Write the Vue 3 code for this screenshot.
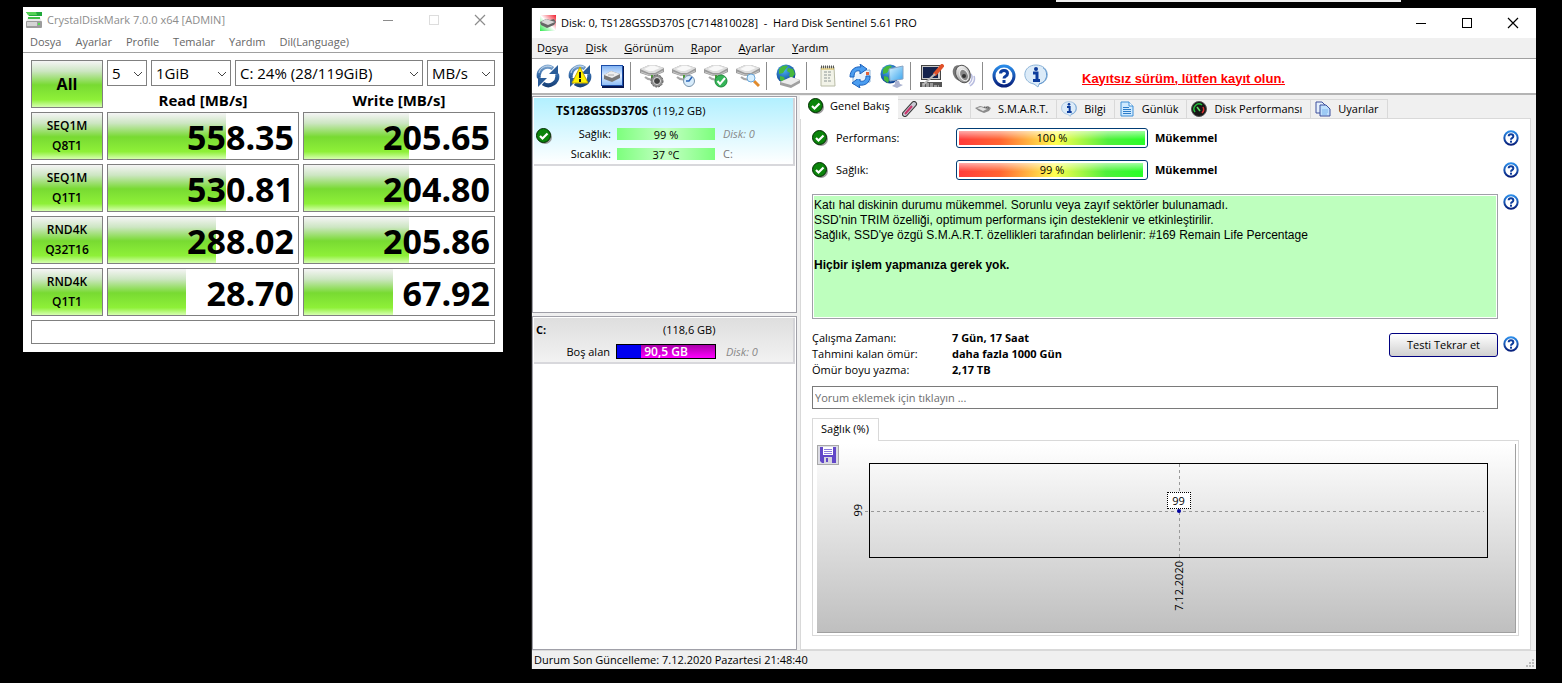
<script setup>
import { ref } from 'vue'

const markMenu = ['Dosya', 'Ayarlar', 'Profile', 'Temalar', 'Yardım', 'Dil(Language)']
const selects = [
  { id: 'count', label: 'Test sayısı', value: '5' },
  { id: 'size', label: 'Test boyutu', value: '1GiB' },
  { id: 'volume-pick', label: 'Sürücü', value: 'C: 24% (28/119GiB)' },
  { id: 'unit', label: 'Birim', value: 'MB/s' },
]
const tests = [
  { name: 'SEQ1M', queue: 'Q8T1', read: ['558.35', 62], write: ['205.65', 55] },
  { name: 'SEQ1M', queue: 'Q1T1', read: ['530.81', 62], write: ['204.80', 55] },
  { name: 'RND4K', queue: 'Q32T16', read: ['288.02', 57], write: ['205.86', 55] },
  { name: 'RND4K', queue: 'Q1T1', read: ['28.70', 41], write: ['67.92', 47] },
]
const sentinelMenu = [
  ['D', 'o', 'sya'],
  ['', 'D', 'isk'],
  ['', 'G', 'örünüm'],
  ['', 'R', 'apor'],
  ['', 'A', 'yarlar'],
  ['', 'Y', 'ardım'],
]
const toolGroups = [
  [['refresh', 'Yenile'], ['refresh-warn', 'Uyarılı yenile'], ['disk-tile', 'Disk']],
  [['drive-gear', 'Disk sesi'], ['drive-clock', 'Disk süresi'], ['drive-ok', 'Disk sınaması'], ['drive-search', 'Disk yüzeyi']],
  [['globe-drive', 'Ağ diski']],
  [['notepad', 'Rapor'], ['mail', 'Rapor gönder'], ['globe-pc', 'Uzak izleme']],
  [['screen-pen', 'Ayarlar'], ['speaker', 'Ses']],
  [['help', 'Yardım'], ['info', 'Bilgi']],
]
const tabs = [
  ['check', 'Genel Bakış'],
  ['thermo', 'Sıcaklık'],
  ['chip', 'S.M.A.R.T.'],
  ['info', 'Bilgi'],
  ['log', 'Günlük'],
  ['gauge', 'Disk Performansı'],
  ['pages', 'Uyarılar'],
]
const activeTab = ref('Genel Bakış')
const gauges = [
  { label: 'Performans:', value: 100 },
  { label: 'Sağlık:', value: 99 },
]
const facts = [
  ['Çalışma Zamanı:', '7 Gün, 17 Saat'],
  ['Tahmini kalan ömür:', 'daha fazla 1000 Gün'],
  ['Ömür boyu yazma:', '2,17 TB'],
]
</script>

<template>
  <svg class="defs" aria-hidden="true">
    <defs>
      <linearGradient id="g-blue" x1="0" y1="0" x2="0" y2="24" gradientUnits="userSpaceOnUse"><stop offset="0" stop-color="#8fb3d8" /><stop offset=".5" stop-color="#2d64a4" /><stop offset="1" stop-color="#143a70" /></linearGradient>
      <linearGradient id="g-ring" x1="0" y1="0" x2="0" y2="1"><stop offset="0" stop-color="#2a8be8" /><stop offset="1" stop-color="#07207c" /></linearGradient>
      <linearGradient id="g-metal" x1="0" y1="0" x2="0" y2="1"><stop offset="0" stop-color="#f4f4f4" /><stop offset="1" stop-color="#8d8d8d" /></linearGradient>
      <linearGradient id="g-tile" x1="0" y1="0" x2="0" y2="1"><stop offset="0" stop-color="#7db0f2" /><stop offset=".5" stop-color="#dcecff" /><stop offset="1" stop-color="#8dbcf5" /></linearGradient>
      <radialGradient id="g-globe" cx=".4" cy=".3" r=".8"><stop offset="0" stop-color="#49b0f5" /><stop offset="1" stop-color="#03307f" /></radialGradient>
      <linearGradient id="g-screen" x1="0" y1="0" x2="1" y2="1"><stop offset="0" stop-color="#d9f4ff" /><stop offset="1" stop-color="#39a4ee" /></linearGradient>
      <linearGradient id="g-app" x1="0" y1="1" x2="1" y2="0"><stop offset="0" stop-color="#2ee84d" /><stop offset=".5" stop-color="#fff" /><stop offset="1" stop-color="#f01c2c" /></linearGradient>

      <g id="drive-shape">
        <path d="M0 5 9 1h6l9 3v4l-9 4H9L0 9z" fill="#9a9a9a" />
        <path d="M0 5 9 1h6l9 3-9 5H9z" fill="#dedede" />
        <path d="M4 5 10 2h5l5 2-7 3H9z" fill="#f8f8f8" />
        <path d="M1 8 9 11h6l8-4" stroke="#c9c9c9" fill="none" />
        <path d="M12 11v4" stroke="#4a9a36" stroke-width="2" />
        <path d="M5 13c2 2 5 3 9 2" stroke="#a7a7a7" stroke-width="2" fill="none" />
      </g>
      <g id="globe-shape">
        <circle cx="10" cy="10" r="9.500" fill="url(#g-globe)" />
        <path d="M3 5C6 1 10 1 12 2L9 6 7 9 3 10zM12 4l5 1 2 5-3 4-3-2 1-3-3-2zM4 12l4 1 1 3-1 3-4-3z" fill="#46b83d" />
      </g>

      <symbol id="i-refresh" viewBox="0 0 24 24">
        <path d="M3 14A9 9 0 0 1 17 4.500" fill="none" stroke="url(#g-blue)" stroke-width="4" />
        <path d="M22 1v9h-9z" fill="#2a5c98" />
        <path d="M21 10A9 9 0 0 1 7 19.500" fill="none" stroke="url(#g-blue)" stroke-width="4" />
        <path d="M2 23v-9h9z" fill="#2a5c98" />
        <path d="M3 9a9 8 0 0 1 13-6" stroke="#c3d8ec" fill="none" />
      </symbol>
      <symbol id="i-refresh-warn" viewBox="0 0 24 24">
        <use href="#i-refresh" />
        <path d="M12 3 20 19H4z" fill="#fff200" stroke="#c2a800" />
        <path d="M12 8v6M12 15v3" stroke="#111" stroke-width="2" />
      </symbol>
      <symbol id="i-disk-tile" viewBox="0 0 24 24">
        <rect x="2" y="2" width="22" height="22" fill="#06164f" />
        <rect x="1.500" y="1.500" width="21" height="20" fill="url(#g-tile)" stroke="#1c4da8" />
        <path d="M4 11 11 7l9 3v4l-8 4-8-3z" fill="#777" />
        <path d="M4 11 11 7l9 3-8 4z" fill="#ededed" />
        <path d="M8 11h6" stroke="#aaa" />
      </symbol>
      <symbol id="i-drive-gear" viewBox="0 0 24 24">
        <use href="#drive-shape" />
        <circle cx="17" cy="17" r="6" fill="#8e8e8e" stroke="#555" stroke-dasharray="2 1" />
        <circle cx="17" cy="17" r="3.500" fill="#444" stroke="#e0e0e0" />
      </symbol>
      <symbol id="i-drive-clock" viewBox="0 0 24 24">
        <use href="#drive-shape" />
        <circle cx="17" cy="17" r="5.500" fill="#d8ecfb" stroke="#7892aa" />
        <path d="M20 13l-3 4h-3" stroke="#2c66b8" fill="none" stroke-width="1.500" />
      </symbol>
      <symbol id="i-drive-ok" viewBox="0 0 24 24">
        <use href="#drive-shape" />
        <circle cx="17" cy="17" r="6" fill="#35b558" stroke="#1c8a3a" />
        <path d="M13.500 17l2.500 3 5-6" stroke="#fff" stroke-width="2" fill="none" />
      </symbol>
      <symbol id="i-drive-search" viewBox="0 0 24 24">
        <use href="#drive-shape" />
        <path d="M18 17l5 5" stroke="#e08a2c" stroke-width="3" />
        <circle cx="15" cy="14" r="4" fill="#d6efff" stroke="#6ca6d8" />
      </symbol>
      <symbol id="i-globe-drive" viewBox="0 0 24 24">
        <use href="#globe-shape" />
        <path d="M4 18 15 13l9 3v3l-9 5-11-3z" fill="#a0a0a0" />
        <path d="M4 18 15 13l9 3-9 5z" fill="#ececec" />
      </symbol>
      <symbol id="i-notepad" viewBox="0 0 24 24">
        <path d="M5 3h13l1 19H5z" fill="#f2f3e8" stroke="#b9bca6" />
        <path d="M5 3h14" stroke="#555" stroke-width="3" stroke-dasharray="1 1" />
        <path d="M5 5h13" stroke="#d8b84a" />
        <path d="M8 8h8M8 11h8M8 14h6M8 17h8" stroke="#8d9696" stroke-dasharray="3 1" />
      </symbol>
      <symbol id="i-mail" viewBox="0 0 24 24">
        <path d="M5 7 22 6v12L5 20z" fill="#eef5fb" stroke="#8fb6da" />
        <rect x="18" y="8" width="3" height="3" fill="#e2603a" />
        <path d="M2 13C2 6 7 2 13 3l-1-3 7 5-7 5v-3c-4-1-6 1-6 6z" fill="#4b9df0" stroke="#1c62bd" />
        <path d="M22 12c0 7-5 10-11 9l1 3-8-5 8-6v4c4 1 6-1 6-5z" fill="#4b9df0" stroke="#1c62bd" />
        <path d="M8 10h9v5H8z" fill="#e6f1fc" />
      </symbol>
      <symbol id="i-globe-pc" viewBox="0 0 24 24">
        <use href="#globe-shape" />
        <path d="M9 5 23 2v13l-13 2z" fill="url(#g-screen)" stroke="#8aa4c4" />
        <path d="M15 17h4l1 3 3 1-6 3-5-2 3-2z" fill="#aab2d0" />
      </symbol>
      <symbol id="i-screen-pen" viewBox="0 0 24 24">
        <rect x="1.500" y="1.500" width="19" height="14" fill="#c9c9c9" stroke="#444" />
        <rect x="3" y="3" width="15" height="11" fill="#14224c" />
        <path d="M0 18h22v5H0z" fill="#555" />
        <path d="M2 20h11M2 22h17" stroke="#ddd" stroke-dasharray="3 1" />
        <path d="M22 2 15 10" stroke="#e0512a" stroke-width="4" stroke-linecap="round" />
        <path d="M15 10 3 21" stroke="#b9b9b9" stroke-width="2" />
      </symbol>
      <symbol id="i-speaker" viewBox="0 0 24 24">
        <path d="M19 10q3 5-2 10M22 12q2 6-4 10" stroke="#b9bde0" stroke-width="1.500" fill="none" />
        <ellipse cx="7" cy="9" rx="6" ry="8" transform="rotate(-20 7 9)" fill="#777" />
        <ellipse cx="11" cy="10" rx="7" ry="9" transform="rotate(-25 11 10)" fill="url(#g-metal)" stroke="#555" />
        <ellipse cx="12" cy="11" rx="4" ry="6" transform="rotate(-25 12 11)" fill="#888" stroke="#eee" />
        <circle cx="12" cy="12" r="2" fill="#333" />
      </symbol>
      <symbol id="i-help" viewBox="0 0 24 24">
        <circle cx="12" cy="12" r="10" fill="#fff" stroke="url(#g-ring)" stroke-width="3" />
        <path d="M8.500 9.500c0-4 7-4 7 0 0 3-3.500 2.500-3.500 5" stroke="#0d3c9c" stroke-width="3" fill="none" />
        <rect x="10.500" y="16" width="3" height="3" fill="#0d3c9c" />
      </symbol>
      <symbol id="i-info" viewBox="0 0 24 24">
        <path d="M12 1c14 0 15 17 3 19l-1 3-4-3C-3 18-2 1 12 1z" fill="#dcebf8" stroke="#8db4d8" />
        <path d="M15 20C26 17 23 5 19 4" stroke="#5b93cc" fill="none" />
        <circle cx="12" cy="5" r="2" fill="#0d3c9c" />
        <path d="M9 9h4v7M9 16.500h7" stroke="#0d3c9c" stroke-width="3" fill="none" />
      </symbol>
      <symbol id="i-check" viewBox="0 0 16 16">
        <circle cx="9" cy="9" r="7" fill="#9a9a9a" />
        <circle cx="7.500" cy="7.500" r="7" fill="#0b840b" stroke="#022d02" />
        <path d="M4 8l2.500 2.500L11.500 5.500" stroke="#fff" stroke-width="2.200" fill="none" />
      </symbol>
      <symbol id="i-thermo" viewBox="0 0 16 16">
        <path d="M3 13 12 3" stroke="#3b3b3b" stroke-width="6" stroke-linecap="round" />
        <path d="M3 13 12 3" stroke="#c9c9d4" stroke-width="4" stroke-linecap="round" />
        <path d="M3 13 10 5" stroke="#c9356b" stroke-width="2" />
      </symbol>
      <symbol id="i-chip" viewBox="0 0 16 16">
        <path d="M0 7l5-2 4 1 4-1 3 2-2 3-5 2-5-2z" fill="#8b8b8b" />
        <path d="M2 7l4-1 6 2-4 2z" fill="#e2e2e2" />
        <path d="M9 6l5 1" stroke="#555" stroke-dasharray="1 1" />
      </symbol>
      <symbol id="i-log" viewBox="0 0 16 16">
        <path d="M2 1h8l4 4v10H2z" fill="#cfeaff" stroke="#3c8ed6" />
        <path d="M10 1v4h4" fill="#fff" stroke="#3c8ed6" />
        <path d="M4 6.500h6M4 8.500h8M4 10.500h8M4 12.500h8" stroke="#2c7cc8" />
      </symbol>
      <symbol id="i-gauge" viewBox="0 0 16 16">
        <circle cx="8" cy="8" r="7.500" fill="#161616" stroke="#555" />
        <path d="M4 11a5 5 0 0 1 7-7" stroke="#22c03c" stroke-width="1.500" fill="none" />
        <path d="M12 6a5 5 0 0 1-1 6" stroke="#e03030" stroke-width="1.500" fill="none" />
        <path d="M6 6l3 4" stroke="#5fe06a" stroke-width="1.500" />
      </symbol>
      <symbol id="i-pages" viewBox="0 0 16 16">
        <path d="M1 1h6l3 3v8H1z" fill="#e4effc" stroke="#3c4f9c" />
        <path d="M5 4h6l4 4v7H5z" fill="#bfe0fd" stroke="#3c4f9c" />
        <path d="M7 9h6M7 11h6M7 13h5" stroke="#7cb4ec" />
      </symbol>
      <symbol id="i-save" viewBox="0 0 16 16">
        <path d="M0 0h16v16H2L0 14z" fill="#6247c8" />
        <rect x="3" width="10" height="8" fill="#fff" />
        <path d="M4 2.500h8M4 4.500h8M4 6.500h8" stroke="#8c7ce0" />
        <rect x="4" y="10" width="8" height="6" fill="#d5d5de" />
        <path d="M6 11h2v4H6z" fill="#6247c8" />
      </symbol>
      <symbol id="i-mark" viewBox="0 0 16 16">
        <path d="M0 0h16v4H3z" fill="#1fa83a" />
        <path d="M0 0h10l1 3H2z" fill="#54d254" />
        <path d="M2 5h12l2 5H0z" fill="#e9e9e9" />
        <path d="M2 5h12v2H2z" fill="#3fbf45" />
        <rect y="9" width="16" height="7" rx="1" fill="#9c9c9c" />
        <rect x="1" y="10" width="10" height="4" fill="#d4d4d4" />
        <rect x="12" y="11" width="2" height="2" fill="#4fe04f" />
      </symbol>
      <symbol id="i-sentinel" viewBox="0 0 16 16">
        <rect width="16" height="16" fill="url(#g-app)" />
        <path d="M0 7l6-3 4 1 4-1 2 3-2 3-7 3-6-3z" fill="#666" />
        <path d="M1 7l5-3 9 3-7 3z" fill="#d8d8d8" />
      </symbol>
      <symbol id="i-min" viewBox="0 0 12 12"><path d="M1 6.500h10" stroke="currentColor" /></symbol>
      <symbol id="i-max" viewBox="0 0 12 12"><rect x="1.500" y="1.500" width="9" height="9" fill="none" stroke="currentColor" /></symbol>
      <symbol id="i-close" viewBox="0 0 12 12"><path d="M1 1l10 10M11 1 1 11" stroke="currentColor" stroke-width="1.200" /></symbol>
    </defs>
  </svg>

  <main class="desktop">
    <div class="peek" />

    <section class="window mark">
      <header class="titlebar">
        <svg class="icon16"><use href="#i-mark" /></svg>
        <h1>CrystalDiskMark 7.0.0 x64 [ADMIN]</h1>
        <div class="controls">
          <button aria-label="Küçült"><svg><use href="#i-min" /></svg></button>
          <button aria-label="Büyüt" disabled><svg><use href="#i-max" /></svg></button>
          <button aria-label="Kapat"><svg><use href="#i-close" /></svg></button>
        </div>
      </header>
      <nav class="menu">
        <button v-for="item in markMenu" :key="item">{{ item }}</button>
      </nav>
      <div class="mark-body">
        <button class="green all">All</button>
        <div class="options">
          <div class="selects">
            <label v-for="s in selects" :key="s.id" :class="['combo', s.id]">
              <select :aria-label="s.label"><option>{{ s.value }}</option></select>
              <svg viewBox="0 0 10 6"><path d="M1 1l4 4 4-4" fill="none" stroke="#444" /></svg>
            </label>
          </div>
          <div class="heads"><span>Read [MB/s]</span><span>Write [MB/s]</span></div>
        </div>
        <template v-for="(t, i) in tests" :key="i">
          <button class="green test">{{ t.name }}<br />{{ t.queue }}</button>
          <div v-for="(m, k) in [t.read, t.write]" :key="k" class="score">
            <div class="fill" :style="{ width: m[1] + '%' }" />
            <span>{{ m[0] }}</span>
          </div>
        </template>
        <div class="note" />
      </div>
    </section>

    <section class="window sentinel">
      <header class="titlebar">
        <svg class="icon16"><use href="#i-sentinel" /></svg>
        <h1>Disk: 0, TS128GSSD370S [C714810028]&nbsp; -&nbsp; Hard Disk Sentinel 5.61 PRO</h1>
        <div class="controls">
          <button aria-label="Küçült"><svg><use href="#i-min" /></svg></button>
          <button aria-label="Büyüt"><svg><use href="#i-max" /></svg></button>
          <button aria-label="Kapat"><svg><use href="#i-close" /></svg></button>
        </div>
      </header>
      <nav class="menu">
        <button v-for="m in sentinelMenu" :key="m.join('')">{{ m[0] }}<u>{{ m[1] }}</u>{{ m[2] }}</button>
      </nav>
      <div class="toolbar">
        <div v-for="(g, i) in toolGroups" :key="i" class="group">
          <button v-for="t in g" :key="t[0]" :aria-label="t[1]"><svg><use :href="'#i-' + t[0]" /></svg></button>
        </div>
        <a href="#kayit">Kayıtsız sürüm, lütfen kayıt olun.</a>
      </div>

      <div class="workspace">
        <aside>
          <div class="list disks">
            <div class="card disk">
              <div class="disk-name"><b>TS128GSSD370S</b> (119,2 GB)</div>
              <svg class="icon16"><use href="#i-check" /></svg>
              <span class="key">Sağlık:</span><span class="mini">99 %</span><i>Disk: 0</i>
              <span class="key">Sıcaklık:</span><span class="mini">37 °C</span><span class="letter">C:</span>
            </div>
          </div>
          <div class="list volumes">
            <div class="card volume">
              <b>C:</b><span class="capacity">(118,6 GB)</span>
              <span class="key">Boş alan</span><span class="space">90,5 GB</span><i>Disk: 0</i>
            </div>
          </div>
        </aside>

        <div class="pane">
          <div class="tabs" role="tablist">
            <button
              v-for="t in tabs"
              :key="t[1]"
              role="tab"
              :aria-selected="activeTab === t[1]"
              :class="{ active: activeTab === t[1] }"
              @click="activeTab = t[1]"
            >
              <svg class="icon16"><use :href="'#i-' + t[0]" /></svg>{{ t[1] }}
            </button>
          </div>
          <div class="page">
            <div v-for="g in gauges" :key="g.label" class="gauge-row">
              <svg class="icon16"><use href="#i-check" /></svg>
              <span class="gauge-label">{{ g.label }}</span>
              <div class="gauge">
                <div class="gauge-fill" :style="{ width: g.value + '%' }" />
                <span>{{ g.value }} %</span>
              </div>
              <b>Mükemmel</b>
              <button class="help" aria-label="Yardım"><svg><use href="#i-help" /></svg></button>
            </div>
            <div class="row">
              <div class="report">
                Katı hal diskinin durumu mükemmel. Sorunlu veya zayıf sektörler bulunamadı.<br />
                SSD'nin TRIM özelliği, optimum performans için desteklenir ve etkinleştirilir.<br />
                Sağlık, SSD'ye özgü S.M.A.R.T. özellikleri tarafından belirlenir: #169 Remain Life Percentage<br />
                <br />
                <b>Hiçbir işlem yapmanıza gerek yok.</b>
              </div>
              <button class="help" aria-label="Yardım"><svg><use href="#i-help" /></svg></button>
            </div>
            <div class="row facts-row">
              <dl>
                <template v-for="f in facts" :key="f[0]"><dt>{{ f[0] }}</dt><dd>{{ f[1] }}</dd></template>
              </dl>
              <button class="retest">Testi Tekrar et</button>
              <button class="help" aria-label="Yardım"><svg><use href="#i-help" /></svg></button>
            </div>
            <input class="comment" type="text" aria-label="Yorum" placeholder="Yorum eklemek için tıklayın ..." />
            <button class="chart-tab">Sağlık (%)</button>
            <div class="chart-frame">
              <div class="chart">
                <button class="save" aria-label="Kaydet"><svg><use href="#i-save" /></svg></button>
                <span class="axis y">99</span>
                <div class="plot">
                  <div class="line-h" />
                  <div class="line-v" />
                  <span class="point-label">99</span>
                  <div class="point" />
                </div>
                <span class="axis x">7.12.2020</span>
              </div>
            </div>
          </div>
        </div>
      </div>
      <footer>
        <span>Durum Son Güncelleme: 7.12.2020 Pazartesi 21:48:40</span>
        <svg class="grip" viewBox="0 0 9 9"><path d="M6 0h2v2H6zM3 3h2v2H3zM6 3h2v2H6zM0 6h2v2H0zM3 6h2v2H3zM6 6h2v2H6z" fill="#bcbcbc" /></svg>
      </footer>
    </section>
  </main>
</template>

<style>
body {
  background: #000;
}
</style>

<style scoped>
* {
  box-sizing: border-box;
}
.defs {
  position: absolute;
  width: 0;
  height: 0;
}
.desktop {
  position: relative;
  min-height: 100vh;
  padding: 7px 26px 14px 23px;
  display: grid;
  grid-template-columns: 480fr 1005fr;
  gap: 28px;
  background: #000;
  color: #000;
  font: 11px/16px "Open Sans", "Noto Sans", sans-serif;
}
.peek {
  position: absolute;
  top: 0;
  left: 1056px;
  width: 345px;
  height: 2px;
  background: #eee;
}
button {
  margin: 0;
  padding: 0;
  border: 0;
  background: none;
  color: inherit;
  font: inherit;
}
.window {
  background: #fff;
  display: flex;
  flex-direction: column;
  min-width: 0;
}
.icon16 {
  width: 16px;
  height: 16px;
  flex: none;
}
.titlebar {
  display: flex;
  align-items: center;
  flex: none;
}
h1 {
  margin: 0;
  font: inherit;
  white-space: nowrap;
  flex: 1;
}
.controls {
  display: flex;
}
.controls button {
  width: 46px;
  height: 24px;
  display: grid;
  place-items: center;
}
.controls svg {
  width: 12px;
  height: 12px;
}
.menu {
  display: flex;
  flex: none;
}

/* benchmark window */
.mark {
  align-self: start;
}
.mark .titlebar {
  height: 25px;
  padding-left: 3px;
  gap: 5px;
  color: #8c8c8c;
}
.mark .controls button:disabled {
  color: #ddd;
}
.mark .menu {
  height: 21px;
  padding: 0 7px;
  gap: 14px;
  color: #666;
  border-bottom: 1px solid #a0a0a0;
}
.mark-body {
  padding: 7px 8px 8px;
  display: grid;
  grid-template-columns: 72px 1fr 1fr;
  grid-template-rows: repeat(5, 48px) 24px;
  gap: 4px;
}
.green {
  border: 1px solid #808080;
  background: linear-gradient(#f5f5f5, #cde6c3 22%, #78da32 52%, #8ef038 84%, #d6ffb0);
  font-weight: 600;
}
.all {
  font-size: 16px;
  font-weight: 700;
}
.test {
  font-size: 12px;
  line-height: 20px;
}
.options {
  grid-column: span 2;
  display: flex;
  flex-direction: column;
}
.selects {
  display: flex;
  gap: 4px;
  flex: none;
}
.combo {
  position: relative;
  height: 26px;
}
.count { width: 40px; }
.size { width: 80px; }
.volume-pick { flex: 1; }
.unit { width: 68px; }
.combo select {
  appearance: none;
  width: 100%;
  height: 26px;
  padding: 0 0 0 4px;
  border: 1px solid #808080;
  border-radius: 0;
  background: #fff;
  color: #000;
  font: 15px "Open Sans", "Noto Sans", sans-serif;
}
.combo svg {
  position: absolute;
  right: 4px;
  top: 11px;
  width: 10px;
  height: 6px;
  pointer-events: none;
}
.heads {
  display: grid;
  grid-template-columns: 1fr 1fr;
  gap: 4px;
  text-align: center;
  font-size: 15px;
  font-weight: 700;
  line-height: 28px;
}
.score {
  position: relative;
  border: 1px solid #808080;
  text-align: right;
  padding-right: 4px;
}
.fill {
  position: absolute;
  inset: 0 auto 0 0;
  background: linear-gradient(#f5f5f5, #cde6c3 22%, #78da32 52%, #8ef038 84%, #d6ffb0);
}
.score span {
  position: relative;
  font-size: 34px;
  font-weight: 700;
  line-height: 48px;
}
.note {
  grid-column: 1 / -1;
  border: 1px solid #808080;
}

/* disk monitor window */
.sentinel {
  margin-top: 1px;
  border-left: 1px solid #222;
}
.sentinel .titlebar {
  height: 30px;
  padding-left: 8px;
  gap: 5px;
}
.sentinel .menu {
  height: 21px;
  padding: 0 5px;
  gap: 17px;
  background: #f0f0f0;
  border-bottom: 1px solid #a0a0a0;
}
.toolbar {
  height: 36px;
  flex: none;
  display: flex;
  align-items: center;
  border-bottom: 2px solid #b4b4b4;
}
.group {
  display: flex;
}
.group + .group::before {
  content: "";
  width: 1px;
  height: 28px;
  margin: 0 5px 0 2px;
  background: #8c8c8c;
}
.group button {
  width: 32px;
  height: 28px;
  display: grid;
  place-items: center;
}
.group svg {
  width: 24px;
  height: 24px;
}
.toolbar a {
  margin-left: 30px;
  padding-top: 4px;
  color: #f00;
  font: bold 13px "Liberation Sans", sans-serif;
}
.workspace {
  flex: 1;
  display: grid;
  grid-template-columns: 265px 1fr;
  gap: 3px;
  background: #f0f0f0;
  border-top: 1px solid #f0f0f0;
  min-height: 0;
}
aside {
  display: grid;
  grid-template-rows: 217px 1fr;
  gap: 3px;
}
.list {
  padding: 1px;
  border: 1px solid #a0a0a8;
  background: #fff;
}
.card {
  display: grid;
  align-items: center;
  white-space: nowrap;
  border-right: 2px solid #d4d4d8;
  border-bottom: 2px solid #d8d8dc;
}
.key {
  text-align: right;
}
.card i {
  color: #888;
}
.disk {
  grid-template-columns: 19px 50px 98px 1fr;
  grid-template-rows: 26px 20px 20px;
  column-gap: 6px;
  padding-left: 2px;
  background: linear-gradient(#b2f0ff, #fff);
}
.disk-name {
  grid-column: 1 / -1;
  padding-left: 20px;
}
.disk-name b {
  font-size: 12px;
  margin-right: 2px;
}
.disk .icon16 {
  grid-row: 2 / span 2;
  align-self: start;
  margin-top: 4px;
}
.mini {
  height: 12px;
  line-height: 13px;
  text-align: center;
  background: linear-gradient(90deg, #7dff7d, #c4ffc4 50%, #7dff7d);
}
.letter {
  color: #777;
}
.disk i,
.letter {
  padding-left: 2px;
}
.volume {
  grid-template-columns: 74px 100px 1fr;
  grid-template-rows: 23px 21px;
  column-gap: 6px;
  padding-left: 2px;
  background: linear-gradient(#dedede, #f2f2f2);
}
.capacity {
  grid-column: 2 / -1;
  padding-left: 47px;
}
.space {
  height: 15px;
  line-height: 14px;
  border: 1px solid #000;
  color: #fff;
  font-size: 12px;
  font-weight: 600;
  text-align: center;
  background: linear-gradient(90deg, #0000f0 24%, transparent 24%), linear-gradient(#a800a8, #f0f);
}
.volume i {
  padding-left: 4px;
}
.pane {
  display: flex;
  flex-direction: column;
  min-width: 0;
  padding-right: 5px;
}
.tabs {
  display: flex;
  align-items: flex-end;
  height: 22px;
  position: relative;
}
.tabs button {
  display: flex;
  align-items: center;
  gap: 7px;
  height: 20px;
  margin-bottom: -1px;
  padding: 0 8px 0 4px;
  border: 1px solid #d9d9d9;
  border-left: 0;
  background: #f0f0f0;
  white-space: nowrap;
}
.tabs .active {
  gap: 6px;
  height: 23px;
  padding: 0 8px 3px;
  border: 0;
  background: #fff;
}
.page {
  flex: 1;
  display: flex;
  flex-direction: column;
  align-items: stretch;
  padding: 3px 11px 13px;
  border: 1px solid #d9d9d9;
  background: #fff;
}
.gauge-row {
  display: flex;
  align-items: center;
  height: 32px;
}
.gauge-label {
  width: 120px;
  margin-left: 8px;
}
.gauge {
  position: relative;
  width: 192px;
  height: 20px;
  padding: 2px;
  border: 1px solid #003c74;
  border-radius: 3px;
  text-align: center;
}
.gauge-fill {
  height: 14px;
  background:
    linear-gradient(#ffffff90, transparent 60%),
    linear-gradient(90deg, #ff3c3c, #ff6432 22%, #ffff50 52%, #50f03c 80%, #28ff28);
}
.gauge span {
  position: absolute;
  inset: 0;
  line-height: 18px;
}
.gauge-row b {
  margin-left: 7px;
}
.help {
  width: 16px;
  height: 16px;
  flex: none;
}
.help svg {
  display: block;
  width: 16px;
  height: 16px;
}
.gauge-row .help {
  margin-left: auto;
}
.row {
  display: flex;
  gap: 5px;
}
.report {
  flex: 1;
  min-height: 125px;
  margin-top: 8px;
  padding: 3px 1px;
  border: 1px solid #a0a0a8;
  box-shadow: inset 0 0 0 1px #fff;
  background: #beffbe;
  font: 12px/15px "Liberation Sans", Arial, sans-serif;
}
.row .report + .help {
  margin-top: 8px;
}
.facts-row {
  margin-top: 11px;
}
dl {
  margin: 0;
  flex: 1;
  display: grid;
  grid-template-columns: 140px 1fr;
}
dd {
  margin: 0;
  font-weight: 700;
}
.retest {
  width: 109px;
  height: 24px;
  margin-top: 3px;
  border: 1px solid #000080;
  border-radius: 3px;
  background: linear-gradient(#fff, #d0d0d0);
}
.facts-row .help {
  margin-top: 6px;
}
.comment {
  height: 23px;
  margin: 8px 21px 9px 0;
  padding: 0 2px;
  border: 1px solid #7a7a7a;
  font: inherit;
}
.comment::placeholder {
  color: #6d6d6d;
}
.chart-tab {
  position: relative;
  align-self: flex-start;
  height: 23px;
  margin-bottom: -1px;
  padding: 0 9px 2px 8px;
  border: 1px solid #d9d9d9;
  border-bottom: 0;
  background: #fff;
}
.chart-frame {
  flex: 1;
  display: flex;
  padding: 3px 2px 2px 4px;
  border: 1px solid #d9d9d9;
}
.chart {
  position: relative;
  flex: 1;
  display: grid;
  grid-template-columns: 52px 1fr 27px;
  grid-template-rows: 1fr 74px;
  padding-top: 19px;
  border-right: 1px solid #a0a0a0;
  border-bottom: 1px solid #a0a0a0;
  background: linear-gradient(#fff, #bfbfbf);
}
.save {
  position: absolute;
  left: 0;
  top: 1px;
  width: 22px;
  height: 20px;
  display: grid;
  place-items: center;
  border: 1px solid #a8a8a8;
  background: #dcdce4;
}
.save svg {
  width: 16px;
  height: 16px;
}
.axis {
  writing-mode: vertical-rl;
  transform: rotate(180deg);
  line-height: 14px;
}
.axis.y {
  place-self: center end;
  margin-right: 4px;
}
.axis.x {
  grid-column: 2;
  place-self: start center;
  margin-top: 3px;
}
.plot {
  position: relative;
  border: 1px solid #000;
}
.line-h {
  position: absolute;
  top: 50%;
  left: -5px;
  right: 3px;
  height: 1px;
  background: repeating-linear-gradient(90deg, #999 0 3px, transparent 3px 6px);
}
.line-v {
  position: absolute;
  left: 50%;
  top: 0;
  bottom: -4px;
  width: 1px;
  background: repeating-linear-gradient(#999 0 3px, transparent 3px 6px);
}
.point-label {
  position: absolute;
  left: calc(50% - 12px);
  bottom: calc(50% + 2px);
  width: 24px;
  height: 17px;
  border: 1px dotted #000;
  background: #fff;
  line-height: 15px;
  text-align: center;
}
.point {
  position: absolute;
  left: calc(50% - 2px);
  top: calc(50% - 2px);
  width: 4px;
  height: 4px;
  border-radius: 2px;
  background: #0000a0;
}
footer {
  display: flex;
  justify-content: space-between;
  align-items: center;
  height: 19px;
  padding: 0 1px 0 2px;
  background: #f0f0f0;
  border-top: 1px solid #d9d9d9;
}
.grip {
  width: 9px;
  height: 9px;
  align-self: flex-end;
  margin-bottom: 1px;
}
</style>
